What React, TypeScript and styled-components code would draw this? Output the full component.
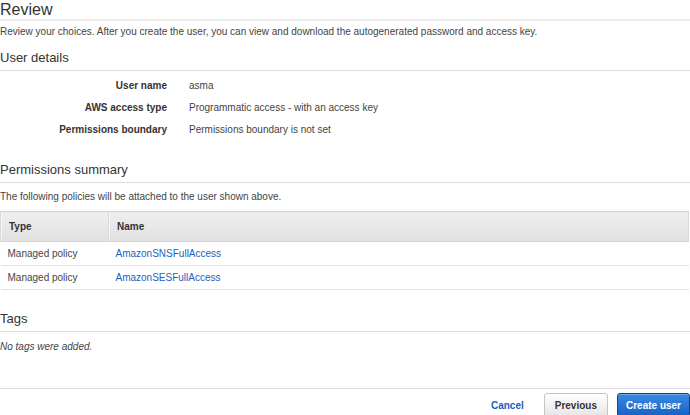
import styled, { createGlobalStyle } from "styled-components";

const GlobalStyle = createGlobalStyle`
  body {
    margin: 0;
    background: #fff;
    font-family: "Liberation Sans", Arial, sans-serif;
    color: #444;
  }
`;

const Page = styled.div`
  width: 690px;
  height: 415px;
  overflow: hidden;
  display: flex;
  flex-direction: column;
`;

const PageTitle = styled.h1`
  margin: 0;
  font-size: 16px;
  line-height: 19px;
  font-weight: 400;
  color: #333;
  border-bottom: 2px solid #ececec;
`;

const Text = styled.p<{ $italic?: boolean; $top: number }>`
  margin: ${(p) => p.$top}px 0 0;
  font-size: 10px;
  line-height: 15px;
  color: #444;
  font-style: ${(p) => (p.$italic ? "italic" : "normal")};
`;

const SectionTitle = styled.h2<{ $top: number }>`
  margin: ${(p) => p.$top}px 0 0;
  font-size: 13px;
  line-height: 16px;
  font-weight: 400;
  color: #333;
  padding-bottom: 4px;
  border-bottom: 1px solid #dcdcdc;
`;

const Details = styled.div`
  margin-top: 3px;
  display: grid;
  grid-template-columns: 167px 1fr;
  column-gap: 22px;
  grid-auto-rows: 22px;
  align-items: center;
  font-size: 10px;
`;

const Label = styled.div`
  text-align: right;
  font-weight: 700;
  color: #333;
`;

const Value = styled.div`
  color: #444;
`;

const Table = styled.table`
  margin-top: 7px;
  width: 689px;
  border-collapse: collapse;
  font-size: 10px;
`;

const Th = styled.th<{ $w?: number }>`
  width: ${(p) => (p.$w ? `${p.$w}px` : "auto")};
  height: 29px;
  padding: 0 8px;
  text-align: left;
  font-weight: 700;
  color: #333;
  background: linear-gradient(#efefef, #e0e0e0);
  border-top: 1px solid #d4d4d4;
  border-bottom: 1px solid #d4d4d4;
  border-left: 1px solid #d8d8d8;
  border-right: 1px solid #d8d8d8;
  box-shadow: inset 1px 0 0 #f6f6f6;
`;

const Td = styled.td`
  height: 23px;
  padding: 0 7px;
  color: #444;
  border-bottom: 1px solid #e3e3e3;
`;

const Link = styled.a`
  color: #1a62c0;
  text-decoration: none;
  cursor: pointer;
`;

const Footer = styled.div`
  margin-top: 34px;
  border-top: 1px solid #dedede;
  padding-top: 4px;
  display: flex;
  justify-content: flex-end;
  align-items: flex-start;
  gap: 9px;
`;

const TextButton = styled.button`
  height: 24px;
  background: none;
  border: none;
  padding: 0 11px 0 0;
  font-family: inherit;
  font-size: 10px;
  font-weight: 700;
  color: #1a5cb8;
  cursor: pointer;
`;

const Button = styled.button<{ $primary?: boolean }>`
  height: 24px;
  padding: 0 ${(p) => (p.$primary ? 8 : 10)}px;
  border-radius: 3px;
  font-family: inherit;
  font-size: 10px;
  font-weight: 700;
  cursor: pointer;
  color: ${(p) => (p.$primary ? "#fff" : "#333")};
  border: 1px solid ${(p) => (p.$primary ? "#1d3f73" : "#c4c4c4")};
  background: ${(p) =>
    p.$primary
      ? "linear-gradient(#3a8ae0, #1761c7)"
      : "linear-gradient(#ffffff, #e6e6e6)"};
  box-shadow: ${(p) => (p.$primary ? "inset 0 1px 0 #6aa8ec" : "none")};
`;

const details = [
  ["User name", "asma"],
  ["AWS access type", "Programmatic access - with an access key"],
  ["Permissions boundary", "Permissions boundary is not set"],
];

const policies = ["AmazonSNSFullAccess", "AmazonSESFullAccess"];

export default function App() {
  return (
    <Page>
      <GlobalStyle />
      <PageTitle>Review</PageTitle>
      <Text $top={3}>
        Review your choices. After you create the user, you can view and download the
        autogenerated password and access key.
      </Text>
      <SectionTitle $top={11}>User details</SectionTitle>
      <Details>
        {details.map(([k, v]) => (
          <>
            <Label key={k}>{k}</Label>
            <Value key={k + "v"}>{v}</Value>
          </>
        ))}
      </Details>
      <SectionTitle $top={22}>Permissions summary</SectionTitle>
      <Text $top={6}>The following policies will be attached to the user shown above.</Text>
      <Table>
        <thead>
          <tr>
            <Th $w={91}>Type</Th>
            <Th>Name</Th>
          </tr>
        </thead>
        <tbody>
          {policies.map((p) => (
            <tr key={p}>
              <Td>Managed policy</Td>
              <Td>
                <Link>{p}</Link>
              </Td>
            </tr>
          ))}
        </tbody>
      </Table>
      <SectionTitle $top={21}>Tags</SectionTitle>
      <Text $top={7} $italic>
        No tags were added.
      </Text>
      <Footer>
        <TextButton>Cancel</TextButton>
        <Button>Previous</Button>
        <Button $primary>Create user</Button>
      </Footer>
    </Page>
  );
}
